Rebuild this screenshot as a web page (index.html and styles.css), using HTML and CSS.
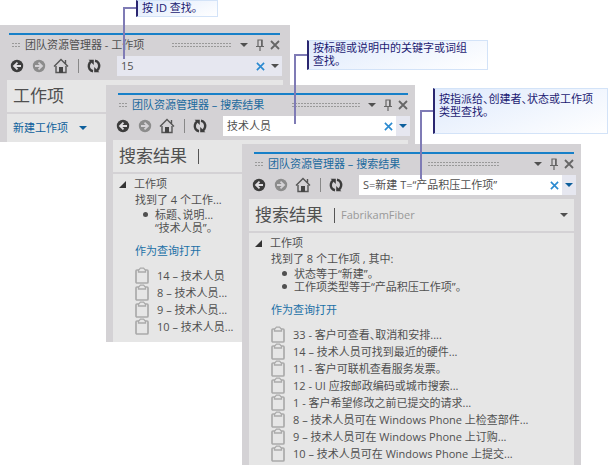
FILE: index.html
```html
<!DOCTYPE html>
<html lang="zh-CN">
<head>
    <meta charset="UTF-8">
    <title>团队资源管理器</title>
    <link rel="stylesheet" href="styles.css">
</head>
<body>
    <svg class="symbols" aria-hidden="true">
        <symbol id="back" viewBox="0 0 14 14">
            <circle cx="7" cy="7" r="6.2" fill="currentColor"/>
            <path d="M11 7H4.5M7.5 3.6L4 7l3.5 3.4" fill="none" stroke="#e0dee1" stroke-width="1.8"/>
        </symbol>
        <symbol id="forward" viewBox="0 0 14 14">
            <circle cx="7" cy="7" r="6.2" fill="currentColor"/>
            <path d="M3 7h6.5M6.5 3.6L10 7l-3.5 3.4" fill="none" stroke="#d4d2d5" stroke-width="1.8"/>
        </symbol>
        <symbol id="home" viewBox="0 0 16 16">
            <path d="M1 8.5L8 1.5l7 7M12.5 6V2" fill="none" stroke="#555" stroke-width="1.4"/>
            <path d="M3 8v6.5h10V8" fill="none" stroke="#555" stroke-width="1.4"/>
            <path d="M6 9h4v6H6z" fill="#444"/>
        </symbol>
        <symbol id="refresh" viewBox="0 0 14 14">
            <path d="M6 12.2C2.6 11.7 1.4 8.8 1.9 6 2.2 4.3 3 3.4 4.2 2.6M8 1.8c3.4.5 4.6 3.4 4.1 6.2-.3 1.7-1.1 2.6-2.3 3.4" fill="none" stroke="#3c3c3c" stroke-width="2.4"/>
            <path d="M1.6 .8h5.2V6zM12.4 13.2H7.2V8z" fill="#3c3c3c"/>
        </symbol>
        <symbol id="arrow" viewBox="0 0 8 4">
            <path d="M0 0h8L4 4z" fill="currentColor"/>
        </symbol>
        <symbol id="pin" viewBox="0 0 8 12">
            <path d="M2 7V1h4v6M0 7.5h8M4 7.5V12" fill="none" stroke="#666" stroke-width="1.2"/>
            <path d="M5 1h1.5v6H5z" fill="#666"/>
        </symbol>
        <symbol id="cross" viewBox="0 0 10 10">
            <path d="M1 1l8 8M9 1L1 9" fill="none" stroke="currentColor" stroke-width="1.8"/>
        </symbol>
        <symbol id="expanded" viewBox="0 0 7 7">
            <path d="M7 0v7H0z" fill="#333"/>
        </symbol>
        <symbol id="clipboard" viewBox="0 0 14 17">
            <rect x="1" y="3" width="12" height="13" rx="1" fill="none" stroke="#aaa" stroke-width="1.7"/>
            <path d="M3.5 5V3.4L5.4 1.2h3.2l1.9 2.2V5z" fill="#e6e6e6" stroke="#aaa" stroke-width="1.3"/>
        </symbol>
    </svg>

    <main class="desktop">
        <section class="window window-id">
            <div class="title-bar">
                <span class="grip grip-small"></span>
                <h2 class="title">团队资源管理器 - 工作项</h2>
                <span class="grip"></span>
                <button class="icon-button" aria-label="菜单"><svg class="icon-arrow"><use href="#arrow"/></svg></button>
                <button class="icon-button" aria-label="固定"><svg class="icon-pin"><use href="#pin"/></svg></button>
                <button class="icon-button" aria-label="关闭"><svg class="icon-cross"><use href="#cross"/></svg></button>
            </div>
            <div class="toolbar">
                <button class="tool" aria-label="后退"><svg class="icon-tool"><use href="#back"/></svg></button>
                <button class="tool tool-disabled" aria-label="前进" disabled><svg class="icon-tool"><use href="#forward"/></svg></button>
                <button class="tool" aria-label="主页"><svg class="icon-home"><use href="#home"/></svg></button>
                <span class="separator"></span>
                <button class="tool" aria-label="刷新"><svg class="icon-tool"><use href="#refresh"/></svg></button>
                <div class="search">
                    <input type="text" class="search-text" aria-label="搜索" value="15">
                    <button class="search-clear" aria-label="清除"><svg class="icon-clear"><use href="#cross"/></svg></button>
                    <button class="search-menu" aria-label="搜索选项"><svg class="icon-arrow"><use href="#arrow"/></svg></button>
                </div>
            </div>
            <div class="page-header">
                <h1 class="page-title">工作项</h1>
            </div>
            <div class="new-item">
                <button class="link-button">新建工作项 <svg class="icon-arrow"><use href="#arrow"/></svg></button>
            </div>
        </section>

        <section class="window window-active window-keyword">
            <div class="title-bar">
                <span class="grip grip-small"></span>
                <h2 class="title">团队资源管理器 – 搜索结果</h2>
                <span class="grip"></span>
                <button class="icon-button" aria-label="菜单"><svg class="icon-arrow"><use href="#arrow"/></svg></button>
                <button class="icon-button" aria-label="固定"><svg class="icon-pin"><use href="#pin"/></svg></button>
                <button class="icon-button" aria-label="关闭"><svg class="icon-cross"><use href="#cross"/></svg></button>
            </div>
            <div class="toolbar">
                <button class="tool" aria-label="后退"><svg class="icon-tool"><use href="#back"/></svg></button>
                <button class="tool tool-disabled" aria-label="前进" disabled><svg class="icon-tool"><use href="#forward"/></svg></button>
                <button class="tool" aria-label="主页"><svg class="icon-home"><use href="#home"/></svg></button>
                <span class="separator"></span>
                <button class="tool" aria-label="刷新"><svg class="icon-tool"><use href="#refresh"/></svg></button>
                <div class="search">
                    <input type="text" class="search-text" aria-label="搜索" value="技术人员">
                    <button class="search-clear" aria-label="清除"><svg class="icon-clear"><use href="#cross"/></svg></button>
                    <button class="search-menu" aria-label="搜索选项"><svg class="icon-arrow"><use href="#arrow"/></svg></button>
                </div>
            </div>
            <div class="page-header">
                <h1 class="page-title">搜索结果</h1>
                <span class="divider"></span>
            </div>
            <div class="results">
                <h3 class="group"><svg class="icon-expanded"><use href="#expanded"/></svg>工作项</h3>
                <p class="summary">找到了 4 个工作...</p>
                <ul class="criteria">
                    <li>标题、说明...<br>“技术人员”。</li>
                </ul>
                <a class="open-query" href="#">作为查询打开</a>
                <ul class="items">
                    <li><svg class="icon-item"><use href="#clipboard"/></svg>14 – 技术人员</li>
                    <li><svg class="icon-item"><use href="#clipboard"/></svg>8 – 技术人员...</li>
                    <li><svg class="icon-item"><use href="#clipboard"/></svg>9 – 技术人员...</li>
                    <li><svg class="icon-item"><use href="#clipboard"/></svg>10 – 技术人员...</li>
                </ul>
            </div>
        </section>

        <section class="window window-active window-filter">
            <div class="title-bar">
                <span class="grip grip-small"></span>
                <h2 class="title">团队资源管理器 – 搜索结果</h2>
                <span class="grip"></span>
                <button class="icon-button" aria-label="菜单"><svg class="icon-arrow"><use href="#arrow"/></svg></button>
                <button class="icon-button" aria-label="固定"><svg class="icon-pin"><use href="#pin"/></svg></button>
                <button class="icon-button" aria-label="关闭"><svg class="icon-cross"><use href="#cross"/></svg></button>
            </div>
            <div class="toolbar">
                <button class="tool" aria-label="后退"><svg class="icon-tool"><use href="#back"/></svg></button>
                <button class="tool tool-disabled" aria-label="前进" disabled><svg class="icon-tool"><use href="#forward"/></svg></button>
                <button class="tool" aria-label="主页"><svg class="icon-home"><use href="#home"/></svg></button>
                <span class="separator"></span>
                <button class="tool" aria-label="刷新"><svg class="icon-tool"><use href="#refresh"/></svg></button>
                <div class="search">
                    <input type="text" class="search-text" aria-label="搜索" value="S=新建 T=“产品积压工作项”">
                    <button class="search-clear" aria-label="清除"><svg class="icon-clear"><use href="#cross"/></svg></button>
                    <button class="search-menu" aria-label="搜索选项"><svg class="icon-arrow"><use href="#arrow"/></svg></button>
                </div>
            </div>
            <div class="page-header">
                <h1 class="page-title">搜索结果</h1>
                <span class="divider"></span>
                <span class="project">FabrikamFiber</span>
                <button class="icon-button" aria-label="项目菜单"><svg class="icon-arrow"><use href="#arrow"/></svg></button>
            </div>
            <div class="results">
                <h3 class="group"><svg class="icon-expanded"><use href="#expanded"/></svg>工作项</h3>
                <p class="summary">找到了 8 个工作项 , 其中:</p>
                <ul class="criteria">
                    <li>状态等于“新建”。</li>
                    <li>工作项类型等于“产品积压工作项”。</li>
                </ul>
                <a class="open-query" href="#">作为查询打开</a>
                <ul class="items">
                    <li><svg class="icon-item"><use href="#clipboard"/></svg>33 - 客户可查看、取消和安排....</li>
                    <li><svg class="icon-item"><use href="#clipboard"/></svg>14 – 技术人员可找到最近的硬件...</li>
                    <li><svg class="icon-item"><use href="#clipboard"/></svg>11 - 客户可联机查看服务发票。</li>
                    <li><svg class="icon-item"><use href="#clipboard"/></svg>12 - UI 应按邮政编码或城市搜索...</li>
                    <li><svg class="icon-item"><use href="#clipboard"/></svg>1 - 客户希望修改之前已提交的请求...</li>
                    <li><svg class="icon-item"><use href="#clipboard"/></svg>8 – 技术人员可在 Windows Phone 上检查部件...</li>
                    <li><svg class="icon-item"><use href="#clipboard"/></svg>9 – 技术人员可在 Windows Phone 上订购...</li>
                    <li><svg class="icon-item"><use href="#clipboard"/></svg>10 – 技术人员可在 Windows Phone 上提交...</li>
                </ul>
            </div>
        </section>

        <span class="connector connector-id"></span>
        <span class="connector connector-keyword"></span>
        <span class="connector connector-filter"></span>
        <p class="callout callout-id">按 ID 查找。</p>
        <p class="callout callout-keyword">按标题或说明中的关键字或词组<br>查找。</p>
        <p class="callout callout-filter">按指派给、创建者、状态或工作项<br>类型查找。</p>
    </main>
</body>
</html>
```
FILE: styles.css
```css
* {
    box-sizing: border-box;
}
body {
    margin: 0;
    background-color: #fff;
    color: #505050;
    font-family: "Open Sans", "Noto Sans CJK SC", sans-serif;
    font-size: 11px;
    line-height: 16px;
    font-feature-settings: "halt";
}
h1, h2, h3, p, ul {
    margin: 0;
    padding: 0;
    font-weight: normal;
    font-size: 11px;
}
ul {
    list-style: none;
}
button, input {
    margin: 0;
    padding: 0;
    border: none;
    background: none;
    color: inherit;
    font: inherit;
    font-feature-settings: inherit;
}
button {
    display: flex;
    align-items: center;
    justify-content: center;
}
svg {
    display: block;
    flex: none;
}
.symbols {
    display: none;
}
.desktop {
    position: relative;
    min-height: 468px;
    overflow: hidden;
    white-space: nowrap;
}

/* windows */
.window {
    position: absolute;
    padding: 8px 7px 0;
    background-color: #d4d2d5;
}
.window-id {
    left: 0;
    top: 25px;
    width: 290px;
}
.window-keyword {
    left: 106px;
    top: 85px;
    width: 309px;
}
.window-filter {
    left: 242px;
    top: 144px;
    width: 339px;
}

.title-bar {
    display: flex;
    align-items: center;
    height: 23px;
    margin-left: 5px;
    padding-bottom: 2px;
    border-top: 2px solid #1780c8;
}
.window-id .title-bar {
    margin: 0 3px 0 2px;
}
.title {
    margin: 0 28px 0 5px;
}
.window-active .title {
    color: #1b6a9e;
}
.grip {
    flex: 1;
    height: 4px;
    margin-right: 4px;
    background: repeating-linear-gradient(90deg, #999 0 2px, transparent 2px 3px) top / 100% 1px no-repeat,
        repeating-linear-gradient(90deg, #999 0 2px, transparent 2px 3px) bottom / 100% 1px no-repeat;
}
.window-filter .grip {
    margin-right: 31px;
}
.title-bar .grip-small {
    flex: none;
    width: 8px;
    margin: 0 0 0 1px;
}
.window-id .grip-small {
    margin-left: 3px;
}
.icon-button {
    width: 16px;
    height: 16px;
}
.title-bar .icon-button:last-child {
    width: 10px;
    margin-left: 2px;
    color: #666;
}
.icon-arrow {
    width: 8px;
    height: 4px;
}
.icon-pin {
    width: 8px;
    height: 12px;
}
.icon-cross {
    width: 10px;
    height: 10px;
}

.toolbar {
    display: flex;
    align-items: center;
    height: 20px;
    margin: 0 -2px 4px -1px;
}
.window-id .toolbar {
    margin-right: 1px;
}
.tool {
    width: 22px;
    height: 20px;
    color: #3c3c3c;
}
.tool-disabled {
    color: #8c8c8c;
}
.icon-tool {
    width: 14px;
    height: 14px;
}
.icon-home {
    width: 16px;
    height: 16px;
}
.separator {
    width: 1px;
    height: 14px;
    margin: 0 4px 0 6px;
    background-color: #888;
}
.search {
    display: flex;
    flex: 1;
    height: 20px;
    min-width: 0;
    margin-left: 12px;
    background-color: #fff;
}
.window-id .search {
    background-color: #e6e7f0;
}
.search-text {
    flex: 1;
    min-width: 0;
    padding-left: 4px;
}
.search-clear {
    width: 16px;
    color: #2b8ad0;
}
.icon-clear {
    width: 9px;
    height: 9px;
}
.search-menu {
    width: 14px;
    background-color: #e6e7f0;
}
.window-active .search-menu {
    color: #0d5f9c;
}

.page-header {
    display: flex;
    align-items: center;
    height: 32px;
    margin-bottom: 2px;
    padding: 0 2px 0 6px;
    background-color: #e6e6e6;
}
.page-title {
    font-size: 17px;
    line-height: 32px;
}
.divider {
    width: 1px;
    height: 15px;
    margin: 0 6px 0 11px;
    background-color: #555;
}
.project {
    flex: 1;
    color: #999;
}
.new-item {
    display: flex;
    align-items: center;
    height: 28px;
    padding-left: 6px;
    background-color: #e6e6e6;
}
.link-button {
    gap: 11px;
    color: #0d5f9c;
}

/* search results */
.results {
    padding: 2px 0 2px 22px;
    background-color: #e6e6e6;
}
.window-keyword .results {
    padding-bottom: 6px;
}
.group {
    display: flex;
    align-items: center;
    gap: 8px;
    margin-left: -16px;
}
.icon-expanded {
    width: 7px;
    height: 7px;
}
.criteria {
    padding-left: 23px;
    line-height: 13px;
}
.window-keyword .criteria {
    padding-left: 20px;
}
.criteria li {
    position: relative;
}
.criteria li::before {
    content: "";
    position: absolute;
    left: -12px;
    top: 4px;
    width: 5px;
    height: 5px;
    border-radius: 50%;
    background-color: #505050;
}
.open-query {
    display: block;
    margin: 9px 0 8px;
    color: #1b70a6;
    text-decoration: none;
}
.items li {
    display: flex;
    align-items: center;
    gap: 8px;
    height: 17px;
}
.icon-item {
    width: 14px;
    height: 17px;
}
.items {
    padding-bottom: 1px;
}

/* callouts */
.callout {
    position: absolute;
    padding: 0 4px;
    border: 1px solid #d3e3f8;
    border-left: 2px solid #2a2670;
    background: linear-gradient(160deg, #dfeafc, #fff);
    color: #1c1a72;
    line-height: 13px;
}
.callout-id {
    left: 136px;
    top: 0;
    width: 82px;
    height: 17px;
}
.callout-keyword {
    left: 307px;
    top: 40px;
    width: 181px;
    height: 30px;
}
.callout-filter {
    left: 433px;
    top: 88px;
    width: 175px;
    height: 46px;
    padding-top: 3px;
}
.connector {
    position: absolute;
    border: solid #7f7bb5;
    border-width: 2px 0 0 2px;
}
.connector-id {
    left: 123px;
    top: 7px;
    width: 13px;
    height: 52px;
}
.connector-keyword {
    left: 294px;
    top: 54px;
    width: 13px;
    height: 70px;
}
.connector-filter {
    left: 420px;
    top: 110px;
    width: 13px;
    height: 69px;
}
```
